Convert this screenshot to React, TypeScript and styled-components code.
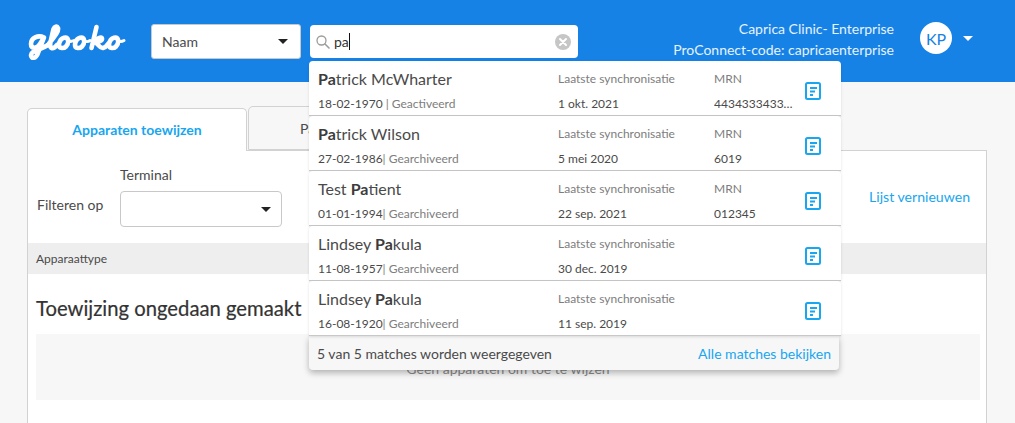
import React from "react";
import styled, { createGlobalStyle } from "styled-components";

const Global = createGlobalStyle`
  html, body { margin: 0; padding: 0; height: 423px; overflow: hidden; background: #f7f7f7; }
  body { font-family: Lato, "Open Sans", sans-serif; color: #4a4a4a; }
  * { box-sizing: border-box; }
`;

const Page = styled.div`
  position: relative;
  width: 1015px;
  height: 423px;
  overflow: hidden;
`;

const Header = styled.header`
  height: 82px;
  background: #1782e6;
  display: flex;
  align-items: flex-start;
  padding: 24px 0 0 28px;
`;

const LogoWrap = styled.div`
  width: 123px;
  height: 38px;
  flex: none;
`;

const NameSelect = styled.div`
  width: 150px;
  height: 35px;
  background: #fff;
  border: 1px solid #c8c8c8;
  border-radius: 3px;
  display: flex;
  align-items: center;
  justify-content: space-between;
  padding: 0 12px 0 10px;
  font-size: 14px;
  color: #4a4a4a;
  flex: none;
`;

const Caret = styled.span<{ $color?: string }>`
  width: 0;
  height: 0;
  border-left: 5px solid transparent;
  border-right: 5px solid transparent;
  border-top: 5px solid ${(p) => p.$color ?? "#222"};
  display: block;
  flex: none;
`;

const SearchBox = styled.div`
  margin: 1px 0 0 9px;
  width: 268px;
  height: 33px;
  background: #fff;
  border-radius: 4px;
  display: flex;
  align-items: center;
  padding: 0 7px 0 6px;
  flex: none;
`;

const SearchText = styled.span`
  margin-left: 4px;
  font-size: 14px;
  color: #333;
  border-right: 1px solid #111;
  line-height: 17px;
  flex: 0 0 auto;
`;

const ClearSlot = styled.span`
  margin-left: auto;
  display: flex;
`;

const HeaderRight = styled.div`
  margin-left: auto;
  display: flex;
  align-items: flex-start;
  padding-right: 42px;
`;

const ClinicInfo = styled.div`
  text-align: right;
  color: #e6f2fd;
  font-size: 14px;
  line-height: 21px;
  margin-top: -6px;
`;

const Avatar = styled.div`
  width: 32px;
  height: 32px;
  margin: -2px 0 0 26px;
  border-radius: 50%;
  background: #fff;
  color: #1782e6;
  font-size: 16px;
  display: flex;
  align-items: center;
  justify-content: center;
`;

const CaretSlot = styled.div`
  margin: 12px 0 0 11px;
`;

const Main = styled.main`
  padding: 24px 28px 0 27px;
`;

const Tabs = styled.div`
  display: flex;
  align-items: flex-end;
  height: 44px;
`;

const Tab = styled.div<{ $active?: boolean }>`
  width: 220px;
  height: ${(p) => (p.$active ? "43px" : "44px")};
  margin-right: ${(p) => (p.$active ? "1px" : "0")};
  background: ${(p) => (p.$active ? "#fff" : "#f7f7f7")};
  border: 1px solid #d2d2d2;
  border-bottom: ${(p) => (p.$active ? "none" : "1px solid #d2d2d2")};
  border-radius: 5px 5px 0 0;
  display: flex;
  align-items: center;
  justify-content: center;
  padding-bottom: ${(p) => (p.$active ? "2px" : "0")};
  padding-left: ${(p) => (p.$active ? "0" : "6px")};
  font-size: 14px;
  font-weight: ${(p) => (p.$active ? 700 : 400)};
  color: ${(p) => (p.$active ? "#18a6f0" : "#4a4a4a")};
  position: relative;
  z-index: ${(p) => (p.$active ? 1 : 0)};
  margin-bottom: ${(p) => (p.$active ? "-1px" : "0")};
`;

const Panel = styled.section`
  width: 960px;
  height: 280px;
  background: #fff;
  border: 1px solid #d2d2d2;
  border-bottom: none;
`;

const FilterRow = styled.div`
  height: 92px;
  display: flex;
  align-items: flex-start;
  padding: 0 16px 0 9px;
`;

const FilterLabel = styled.span`
  font-size: 14px;
  margin-top: 45px;
  line-height: 18px;
  width: 83px;
  flex: none;
`;

const FilterField = styled.div`
  width: 162px;
  padding-top: 15px;
`;

const FieldLabel = styled.div`
  font-size: 14px;
  line-height: 18px;
  margin-bottom: 7px;
`;

const TerminalSelect = styled.div`
  height: 36px;
  background: #fff;
  border: 1px solid #c8c8c8;
  border-radius: 4px;
  display: flex;
  align-items: center;
  justify-content: flex-end;
  padding-right: 10px;
`;

const RefreshLink = styled.a`
  margin: 37px 0 0 auto;
  font-size: 14.1px;
  line-height: 18px;
  color: #18a6f0;
`;

const TableHead = styled.div`
  height: 31px;
  background: #eeeeee;
  display: flex;
  align-items: center;
  padding-left: 8px;
  font-size: 12px;
  color: #4a4a4a;
`;

const Content = styled.div`
  padding: 21px 6px 0 8px;
`;

const Heading = styled.h2`
  margin: 0;
  font-size: 20.25px;
  font-weight: 400;
  line-height: 26px;
  color: #333;
  -webkit-text-stroke: 0.2px #333;
`;

const EmptyBox = styled.div`
  margin-top: 13px;
  height: 66px;
  background: #f7f7f7;
  display: flex;
  justify-content: center;
  align-items: flex-start;
  padding-top: 26px;
  font-size: 14px;
  line-height: 18px;
  color: #8a8a8a;
`;

const Dropdown = styled.div`
  position: absolute;
  left: 309px;
  top: 61px;
  width: 532px;
  z-index: 5;
`;

const Row = styled.div`
  height: 55px;
  background: #fff;
  border-radius: 4px 4px 0 0;
  border-bottom: 1px solid #c8c8c8;
  display: grid;
  grid-template-columns: 240px 156px 91px 1fr;
  padding: 0 0 0 9px;
  position: relative;
  box-shadow: 0 1px 3px rgba(0, 0, 0, 0.12);
`;

const Cell = styled.div<{ $narrow?: boolean }>`
  display: flex;
  flex-direction: column;
  padding-top: 8px;
  padding-right: ${(p) => (p.$narrow ? "10px" : "0")};
  min-width: 0;
`;

const Name = styled.div`
  font-size: 16px;
  line-height: 20px;
  color: #4a4a4a;
  b { font-weight: 700; color: #3c3c3c; }
`;

const SubLine = styled.div`
  margin-top: 7px;
  font-size: 12px;
  line-height: 16px;
  color: #4a4a4a;
  white-space: pre;
  span { color: #7d7d7d; }
`;

const SmallLabel = styled.div`
  font-size: 12px;
  line-height: 20px;
  color: #7d7d7d;
`;

const Value = styled.div`
  margin-top: 7px;
  font-size: 12px;
  line-height: 16px;
  color: #4a4a4a;
  white-space: nowrap;
  overflow: hidden;
  text-overflow: ellipsis;
`;

const IconCell = styled.div`
  display: flex;
  padding: 21px 0 0 0;
`;

const Footer = styled.div`
  width: 530px;
  height: 34px;
  background: #f7f7f7;
  border-radius: 0 0 4px 4px;
  box-shadow: 0 3px 6px rgba(0, 0, 0, 0.28);
  display: flex;
  align-items: center;
  justify-content: space-between;
  padding: 0 8px;
  font-size: 14px;
  color: #4a4a4a;
  a { color: #18a6f0; }
`;

const Logo = () => (
  <svg width="100" height="38" viewBox="0 0 100 38" fill="none" aria-label="glooko">
    <g stroke="#fff" strokeWidth="4.600" strokeLinecap="round" strokeLinejoin="round">
      <path d="M16 13.500C10 10.500 3 14 3 20C3 25 9 25 12 20L16 13.500L10 29C8 35 3 35 3 31C3 27 12 26 20 21" />
      <path d="M20 21C25 14 31 8 30 4C29 1.500 26.500 2.500 25.500 5L22.500 18C21 25 25 26 29 21" />
      <path d="M37.500 13.500C33 13.500 31 18 31 21C31 25 36 24.500 38 22.500C41 19.500 41 14 37.500 13.500Z" />
      <path d="M39 15.500C41 18 43 18 46 16.500" strokeWidth="3" />
      <path d="M53.500 13.500C49 13.500 47 18 47 21C47 25 52 24.500 54 22.500C57 19.500 57 14 53.500 13.500Z" />
      <path d="M55 15.500C57 18 60 18 62 16.500" strokeWidth="3" />
      <path d="M68.500 3L63.500 24M66 18C69 14.500 73.500 12 74 14.500C74.500 17 69 18.500 66.500 18.500C70.500 19 71 24.500 75 24C77 23.500 79 21.500 80 20" />
      <path d="M87.500 13.500C83 13.500 81 18 81 21C81 25 86 24.500 88 22.500C91 19.500 91 14 87.500 13.500Z" />
      <path d="M89 15.500C91 18 93.500 18 96 16.500" strokeWidth="3" />
    </g>
  </svg>
);

const NoteIcon = () => (
  <svg width="16" height="18" viewBox="0 0 16 18" fill="none">
    <rect x="1" y="1" width="14" height="16" rx="1.500" stroke="#18a6f0" strokeWidth="2" />
    <path d="M5 6H12M5 9.500H10M5 13H8" stroke="#18a6f0" strokeWidth="2" />
  </svg>
);

const SearchIcon = () => (
  <svg width="14" height="14" viewBox="0 0 14 14" fill="none">
    <circle cx="5.500" cy="5.500" r="4.500" stroke="#9b9b9b" strokeWidth="1.300" />
    <path d="M9 9L13 13" stroke="#9b9b9b" strokeWidth="1.600" strokeLinecap="round" />
  </svg>
);

const ClearIcon = () => (
  <svg width="16" height="16" viewBox="0 0 16 16">
    <circle cx="8" cy="8" r="8" fill="#c6c6c6" />
    <path d="M5 5L11 11M11 5L5 11" stroke="#fff" strokeWidth="2" strokeLinecap="round" />
  </svg>
);

type Patient = {
  pre?: string;
  hit: string;
  post: string;
  dob: string;
  status: string;
  sync: string;
  mrn?: string;
};

const patients: Patient[] = [
  { hit: "Pa", post: "trick McWharter", dob: "18-02-1970", status: " | Geactiveerd", sync: "1 okt. 2021", mrn: "4434333433333" },
  { hit: "Pa", post: "trick Wilson", dob: "27-02-1986", status: "| Gearchiveerd", sync: "5 mei 2020", mrn: "6019" },
  { pre: "Test ", hit: "Pa", post: "tient", dob: "01-01-1994", status: "| Gearchiveerd", sync: "22 sep. 2021", mrn: "012345" },
  { pre: "Lindsey ", hit: "Pa", post: "kula", dob: "11-08-1957", status: "| Gearchiveerd", sync: "30 dec. 2019" },
  { pre: "Lindsey ", hit: "Pa", post: "kula", dob: "16-08-1920", status: "| Gearchiveerd", sync: "11 sep. 2019" },
];

export default function App() {
  return (
    <Page>
      <Global />
      <Header>
        <LogoWrap>
          <Logo />
        </LogoWrap>
        <NameSelect>
          Naam
          <Caret />
        </NameSelect>
        <SearchBox>
          <SearchIcon />
          <SearchText>pa</SearchText>
          <ClearSlot>
            <ClearIcon />
          </ClearSlot>
        </SearchBox>
        <HeaderRight>
          <ClinicInfo>
            <div>Caprica Clinic- Enterprise</div>
            <div>ProConnect-code: capricaenterprise</div>
          </ClinicInfo>
          <Avatar>KP</Avatar>
          <CaretSlot>
            <Caret $color="#fff" />
          </CaretSlot>
        </HeaderRight>
      </Header>
      <Main>
        <Tabs>
          <Tab $active>Apparaten toewijzen</Tab>
          <Tab>Patiënten toewijzen</Tab>
        </Tabs>
        <Panel>
          <FilterRow>
            <FilterLabel>Filteren op</FilterLabel>
            <FilterField>
              <FieldLabel>Terminal</FieldLabel>
              <TerminalSelect>
                <Caret />
              </TerminalSelect>
            </FilterField>
            <RefreshLink>Lijst vernieuwen</RefreshLink>
          </FilterRow>
          <TableHead>Apparaattype</TableHead>
          <Content>
            <Heading>Toewijzing ongedaan gemaakt</Heading>
            <EmptyBox>Geen apparaten om toe te wijzen</EmptyBox>
          </Content>
        </Panel>
      </Main>
      <Dropdown>
        {patients.map((p) => (
          <Row key={p.dob}>
            <Cell>
              <Name>
                {p.pre}
                <b>{p.hit}</b>
                {p.post}
              </Name>
              <SubLine>
                {p.dob}
                <span>{p.status}</span>
              </SubLine>
            </Cell>
            <Cell>
              <SmallLabel>Laatste synchronisatie</SmallLabel>
              <Value>{p.sync}</Value>
            </Cell>
            <Cell $narrow>
              {p.mrn && <SmallLabel>MRN</SmallLabel>}
              {p.mrn && <Value>{p.mrn}</Value>}
            </Cell>
            <IconCell>
              <NoteIcon />
            </IconCell>
          </Row>
        ))}
        <Footer>
          <span>5 van 5 matches worden weergegeven</span>
          <a>Alle matches bekijken</a>
        </Footer>
      </Dropdown>
    </Page>
  );
}
